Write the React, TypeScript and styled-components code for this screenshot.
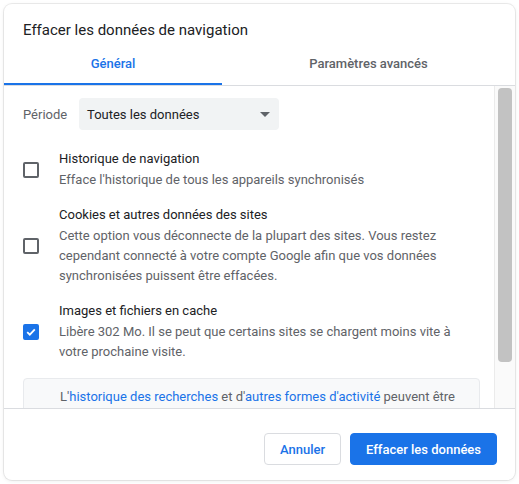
import styled, { createGlobalStyle } from "styled-components";

const GlobalStyle = createGlobalStyle`
    body {
        margin: 0;
        background: #ffffff;
        font-family: Roboto, "Liberation Sans", Arial, sans-serif;
    }
`;

const Page = styled.div`
    padding: 4px;
`;

const Dialog = styled.div`
    width: 511px;
    height: 476px;
    border-radius: 8px;
    background: #ffffff;
    box-shadow: 0 0 0 1px rgba(0, 0, 0, 0.07), 0 1px 4px rgba(0, 0, 0, 0.08);
    display: flex;
    flex-direction: column;
    overflow: hidden;
`;

const Title = styled.h1`
    margin: 0;
    padding: 16px 19px 4px;
    font-size: 15px;
    line-height: 20px;
    font-weight: 400;
    color: #202124;
`;

const Tabs = styled.div`
    display: flex;
    border-bottom: 1px solid #dadce0;
`;

const Tab = styled.div<{ $active?: boolean; $width?: number }>`
    ${({ $width }) => ($width ? `width: ${$width}px;` : "flex: 1;")}
    height: 39px;
    display: flex;
    align-items: center;
    justify-content: center;
    font-size: 13px;
    font-weight: 500;
    color: ${({ $active }) => ($active ? "#1a73e8" : "#5f6368")};
    border-bottom: 2px solid ${({ $active }) => ($active ? "#1a73e8" : "transparent")};
`;

const ScrollArea = styled.div`
    height: 322px;
    display: flex;
`;

const Content = styled.div`
    flex: 1;
    padding: 12px 20px 0 19px;
    overflow: hidden;
`;

const Scrollbar = styled.div`
    width: 14px;
    border-left: 1px solid #ebebeb;
    background: #fafafa;
    padding: 2px 3px 0 3px;
`;

const Thumb = styled.div`
    height: 274px;
    border-radius: 4px;
    background: #c2c2c2;
`;

const PeriodRow = styled.div`
    display: flex;
    align-items: center;
    margin-bottom: 19px;
`;

const PeriodLabel = styled.span`
    width: 56px;
    font-size: 13px;
    color: #5f6368;
`;

const Select = styled.div`
    width: 200px;
    height: 32px;
    box-sizing: border-box;
    padding: 0 9px 0 8px;
    border-radius: 4px;
    background: #f1f3f4;
    display: flex;
    align-items: center;
    justify-content: space-between;
    font-size: 13px;
    color: #202124;
`;

const Arrow = styled.span`
    width: 0;
    height: 0;
    border-left: 5px solid transparent;
    border-right: 5px solid transparent;
    border-top: 5px solid #5f6368;
`;

const Options = styled.div`
    display: flex;
    flex-direction: column;
    gap: 15px;
`;

const Option = styled.div`
    display: flex;
    align-items: center;
`;

const CheckCell = styled.div`
    width: 36px;
    flex-shrink: 0;
`;

const Box = styled.div<{ $checked?: boolean }>`
    width: 16px;
    height: 16px;
    box-sizing: border-box;
    border-radius: 2px;
    border: 2px solid ${({ $checked }) => ($checked ? "#1a73e8" : "#5f6368")};
    background: ${({ $checked }) => ($checked ? "#1a73e8" : "transparent")};
    display: flex;
    align-items: center;
    justify-content: center;
`;

const OptionText = styled.div`
    flex: 1;
    font-size: 13px;
    line-height: 20px;
`;

const OptionTitle = styled.div`
    color: #202124;
`;

const OptionSub = styled.div`
    margin-top: 1px;
    color: #5f6368;
`;

const Info = styled.div`
    margin-top: 16px;
    width: 457px;
    box-sizing: border-box;
    padding: 8px 16px 8px 28px;
    border: 1px solid #e8eaed;
    border-radius: 4px;
    background: #f8f9fa;
    font-size: 13px;
    line-height: 20px;
    color: #5f6368;
    text-align: center;
`;

const Link = styled.a`
    color: #1a73e8;
    text-decoration: none;
`;

const Footer = styled.div`
    border-top: 1px solid #dadce0;
    padding: 24px 18px 15px;
    display: flex;
    justify-content: flex-end;
    gap: 9px;
`;

const Button = styled.button<{ $primary?: boolean }>`
    height: 32px;
    padding: 0 15px;
    border-radius: 4px;
    border: 1px solid ${({ $primary }) => ($primary ? "#1a73e8" : "#dadce0")};
    background: ${({ $primary }) => ($primary ? "#1a73e8" : "#ffffff")};
    color: ${({ $primary }) => ($primary ? "#ffffff" : "#1a73e8")};
    font-family: Roboto, "Liberation Sans", Arial, sans-serif;
    font-size: 13px;
    font-weight: 500;
`;

function Check({ checked }: { checked?: boolean }) {
    return (
        <Box $checked={checked}>
            {checked && (
                <svg width="12" height="12" viewBox="0 0 12 12">
                    <path d="M2.2 6.2 L4.8 8.7 L9.8 3.4" fill="none" stroke="#ffffff" strokeWidth="1.8" />
                </svg>
            )}
        </Box>
    );
}

const options = [
    {
        title: "Historique de navigation",
        sub: "Efface l'historique de tous les appareils synchronisés",
        checked: false,
    },
    {
        title: "Cookies et autres données des sites",
        sub: "Cette option vous déconnecte de la plupart des sites. Vous restez cependant connecté à votre compte Google afin que vos données synchronisées puissent être effacées.",
        checked: false,
    },
    {
        title: "Images et fichiers en cache",
        sub: "Libère 302 Mo. Il se peut que certains sites se chargent moins vite à votre prochaine visite.",
        checked: true,
    },
];

export default function App() {
    return (
        <Page>
            <GlobalStyle />
            <Dialog>
                <Title>Effacer les données de navigation</Title>
                <Tabs>
                    <Tab $active $width={218}>Général</Tab>
                    <Tab>Paramètres avancés</Tab>
                </Tabs>
                <ScrollArea>
                    <Content>
                        <PeriodRow>
                            <PeriodLabel>Période</PeriodLabel>
                            <Select>
                                Toutes les données
                                <Arrow />
                            </Select>
                        </PeriodRow>
                        <Options>
                            {options.map((o) => (
                                <Option key={o.title}>
                                    <CheckCell>
                                        <Check checked={o.checked} />
                                    </CheckCell>
                                    <OptionText>
                                        <OptionTitle>{o.title}</OptionTitle>
                                        <OptionSub>{o.sub}</OptionSub>
                                    </OptionText>
                                </Option>
                            ))}
                        </Options>
                        <Info>
                            L'<Link>historique des recherches</Link> et d'<Link>autres formes d'activité</Link> peuvent être
                            enregistrées dans votre compte Google lorsque vous êtes connecté. Vous pouvez les supprimer
                            à tout moment.
                        </Info>
                    </Content>
                    <Scrollbar>
                        <Thumb />
                    </Scrollbar>
                </ScrollArea>
                <Footer>
                    <Button>Annuler</Button>
                    <Button $primary>Effacer les données</Button>
                </Footer>
            </Dialog>
        </Page>
    );
}
